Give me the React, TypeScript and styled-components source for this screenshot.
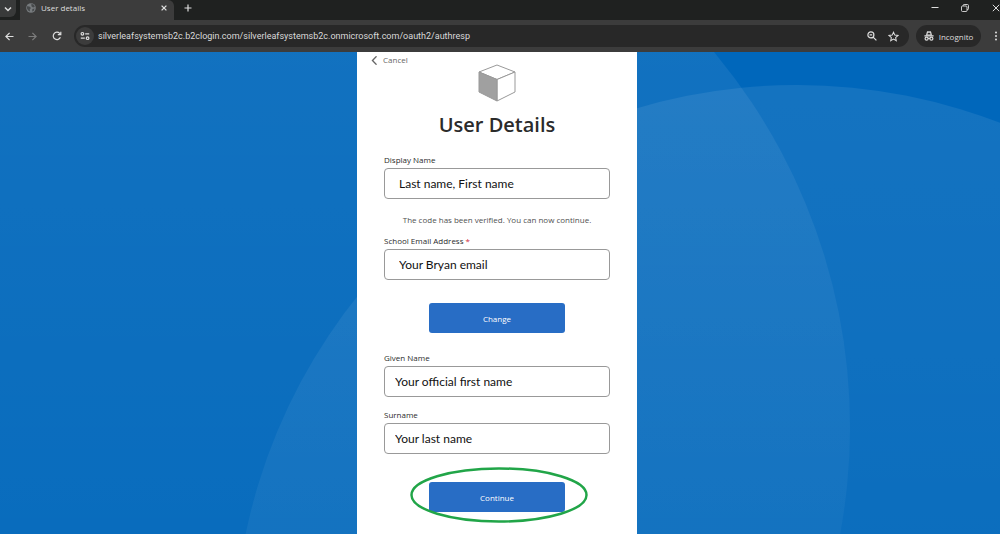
import React from "react";
import styled, { createGlobalStyle } from "styled-components";

const GlobalStyle = createGlobalStyle`
  *, *::before, *::after { box-sizing: border-box; }
  body { margin: 0; font-family: "Open Sans", "Noto Sans", sans-serif; }
  button, input { font: inherit; margin: 0; }
`;

const Window = styled.div`
  display: flex;
  flex-direction: column;
  min-height: 100vh;
  overflow: hidden;
`;

const TabStrip = styled.header`
  display: flex;
  height: 20px;
  background: #1f2120;
  color: #dedede;
`;

const IconButton = styled.button<{ $w: number; $dim?: boolean }>`
  display: flex;
  align-items: center;
  justify-content: center;
  flex: none;
  width: ${(p) => p.$w}px;
  height: 16px;
  padding: 0;
  border: 0;
  background: none;
  color: ${(p) => (p.$dim ? "#7c7c7c" : "#dedede")};
`;

const EdgeButton = styled(IconButton)`
  justify-content: flex-end;
`;

const TabSearch = styled(IconButton)`
  height: 17px;
  background: #393a3a;
  border-radius: 0 0 6px 0;
  margin-right: 4px;
`;

const Tab = styled.div`
  display: flex;
  align-items: center;
  gap: 5px;
  width: 154px;
  padding: 0 3px 4px 6px;
  background: #3c3c3c;
  border-radius: 0 6px 0 0;
  font-size: 8px;
`;

const TabTitle = styled.span`
  flex: 1;
  line-height: 16px;
`;

const WindowControls = styled.div`
  display: flex;
  margin-left: auto;
`;

const Toolbar = styled.nav`
  display: flex;
  align-items: center;
  height: 32px;
  background: #3c3c3c;
`;

const AddressBar = styled.div`
  display: flex;
  align-items: center;
  flex: 1;
  min-width: 0;
  height: 22px;
  margin: 0 7px 0 5px;
  padding: 0 5px 0 2px;
  border-radius: 11px;
  background: #282828;
`;

const SiteInfo = styled(IconButton)`
  height: 18px;
  border-radius: 9px;
  background: #3c3c3c;
`;

const AddressInput = styled.input`
  flex: 1;
  min-width: 0;
  padding: 0 0 0 4px;
  border: 0;
  outline: 0;
  background: none;
  color: #dadada;
  font-family: Roboto, sans-serif;
  font-size: 9px;
  line-height: 16px;
`;

const Incognito = styled.button`
  display: flex;
  align-items: center;
  justify-content: center;
  gap: 5px;
  width: 65px;
  height: 22px;
  padding: 0;
  border: 0;
  border-radius: 11px;
  background: #282828;
  color: #dedede;
  font-size: 8px;
`;

const Stage = styled.main`
  position: relative;
  display: flex;
  justify-content: center;
  flex: 1;
  background: #0067bb;
`;

const Backdrop = styled.svg`
  position: absolute;
  inset: 0;
  width: 100%;
  height: 100%;
`;

const Card = styled.form`
  position: relative;
  width: 280px;
  margin-right: 6px;
  background: #fff;
  color: #2b2b2b;
`;

const CardTop = styled.div`
  display: grid;
  grid-template-columns: 1fr auto 1fr;
  align-items: start;
  padding: 0 13px;
`;

const Cancel = styled.button`
  display: flex;
  align-items: center;
  gap: 4px;
  padding: 0;
  border: 0;
  background: none;
  color: #666;
  font-size: 8px;
  line-height: 16px;
`;

const Cube = styled.svg`
  width: 40px;
  height: 38px;
  margin-top: 12px;
`;

const CardBody = styled.div`
  display: flex;
  flex-direction: column;
  padding: 0 27px 6px;
`;

const Title = styled.h1`
  margin: 8px 0 14px;
  font-size: 20px;
  font-weight: 600;
  line-height: 30px;
  text-align: center;
`;

const Label = styled.label`
  font-size: 8px;
  font-weight: 500;
  line-height: 12px;
  margin-bottom: 2px;
`;

const Required = styled.span`
  color: #d0283c;
`;

const TextInput = styled.input<{ $inset: number }>`
  width: 100%;
  height: 31px;
  padding: 0 ${(p) => p.$inset}px;
  border: 1px solid #999;
  border-radius: 4px;
  background: #fff;
  color: #111;
  font-family: Lato, sans-serif;
  font-size: 12px;
`;

const Notice = styled.p`
  margin: 14px 0 8px;
  color: #505050;
  font-size: 8px;
  line-height: 14px;
  text-align: center;
`;

const Action = styled.button`
  width: 136px;
  height: 30px;
  padding: 0;
  border: 0;
  border-radius: 3px;
  background: #286dc5;
  color: #fff;
  font-size: 8px;
`;

const Field = styled.div<{ $after: number }>`
  display: flex;
  flex-direction: column;
  margin-bottom: ${(p) => p.$after}px;
`;

const ChangeRow = styled.div`
  display: flex;
  justify-content: center;
  margin-bottom: 19px;
`;

const ContinueRow = styled(ChangeRow)`
  position: relative;
  margin: 0;
`;

const Ring = styled.svg`
  position: absolute;
  left: 50%;
  top: 50%;
  width: 184px;
  height: 64px;
  transform: translate(-50%, -50%);
  pointer-events: none;
`;

const Icon = ({ size, box = 24, width = 2, children }: { size: number; box?: number; width?: number; children: React.ReactNode }) => (
  <svg width={size} height={size} viewBox={`0 0 ${box} ${box}`} fill="none" stroke="currentColor" strokeWidth={width} aria-hidden="true">
    {children}
  </svg>
);

export default function App() {
  return (
    <Window>
      <GlobalStyle />
      <TabStrip>
        <TabSearch $w={16} aria-label="Search tabs">
          <Icon size={8} box={8} width={1.5}><path d="M1 2.5 4 5.5 7 2.5" /></Icon>
        </TabSearch>
        <Tab>
          <Icon size={10} box={10} width={0}>
            <circle cx="5" cy="5" r="4.8" fill="#777b7e" />
            <path d="M1 3.2 3.4 3.6 5 5 3.8 6.2 4 8.6 2.2 7.6 1 5.6ZM5.4.8 8 1.8 8.8 4 7 4.6 5.4 3.2ZM6.4 6 8.6 5.6 7.6 8 6.2 8.6Z" fill="#46494b" />
          </Icon>
          <TabTitle>User details</TabTitle>
          <IconButton $w={14} aria-label="Close tab">
            <Icon size={6} box={6} width={1.3}><path d="M.6.6 5.4 5.4M5.4.6.6 5.4" /></Icon>
          </IconButton>
        </Tab>
        <IconButton $w={27} aria-label="New tab">
          <Icon size={8} box={8} width={1.2}><path d="M4 .5V7.5M.5 4H7.5" /></Icon>
        </IconButton>
        <WindowControls>
          <IconButton $w={30} aria-label="Minimize">
            <Icon size={8} box={8} width={1}><path d="M.5 3.5H7.5" /></Icon>
          </IconButton>
          <IconButton $w={30} aria-label="Restore">
            <Icon size={8} box={8} width={0.9}>
              <rect x=".5" y="2" width="5.5" height="5.5" rx="1" />
              <path d="M2.2 2V1.4Q2.2.5 3.1.5H6.4Q7.5.5 7.5 1.6V4.8Q7.5 5.8 6 5.8" />
            </Icon>
          </IconButton>
          <EdgeButton $w={20} aria-label="Close">
            <Icon size={8} box={8} width={1}><path d="M.8.8 7.2 7.2M7.2.8.8 7.2" /></Icon>
          </EdgeButton>
        </WindowControls>
      </TabStrip>

      <Toolbar>
        <IconButton $w={19} aria-label="Back">
          <Icon size={9} box={9} width={1.2}><path d="M8.5 4.5H1M4.6.8.9 4.5 4.6 8.2" /></Icon>
        </IconButton>
        <IconButton $w={26} $dim aria-label="Forward">
          <Icon size={9} box={9} width={1.2}><path d="M.5 4.5H8M4.4.8 8.1 4.5 4.4 8.2" /></Icon>
        </IconButton>
        <IconButton $w={24} aria-label="Reload">
          <Icon size={10} box={10} width={1.2}>
            <path d="M8.4 6.2A3.7 3.7 0 1 1 7.7 2.4L8.6 3.4" />
            <path d="M8.8.7V3.7H5.8" />
          </Icon>
        </IconButton>
        <AddressBar>
          <SiteInfo $w={18} aria-label="Site information">
            <Icon size={10} box={10} width={1.2}>
              <circle cx="2.4" cy="2.8" r="1.3" />
              <path d="M5.2 2.8H9.2M.8 7.2H4.8" />
              <circle cx="7.6" cy="7.2" r="1.3" />
            </Icon>
          </SiteInfo>
          <AddressInput
            aria-label="Address"
            defaultValue="silverleafsystemsb2c.b2clogin.com/silverleafsystemsb2c.onmicrosoft.com/oauth2/authresp"
          />
          <IconButton $w={22} aria-label="Zoom">
            <Icon size={10} box={10} width={1.2}>
              <circle cx="3.9" cy="3.9" r="3" />
              <path d="M6.1 6.1 9.4 9.4M2.6 3.9H5.2" />
            </Icon>
          </IconButton>
          <IconButton $w={21} aria-label="Bookmark">
            <Icon size={11} box={24} width={2.2}>
              <path d="m12 2.6 2.9 6.4 6.9.7-5.2 4.7 1.5 6.9-6.1-3.6-6.1 3.6 1.5-6.9L2.2 9.7l6.9-.7Z" />
            </Icon>
          </IconButton>
        </AddressBar>
        <Incognito>
          <Icon size={10} box={20} width={2.4}>
            <path d="M5.4 8 6.8 2.2Q7 1.4 8 1.7L10 2.3 12 1.7Q13 1.4 13.2 2.2L14.6 8Z" />
            <path d="M.8 9.6H19.2M8 15.2Q10 13.8 12 15.2" />
            <circle cx="5.2" cy="15.4" r="3" />
            <circle cx="14.8" cy="15.4" r="3" />
          </Icon>
          Incognito
        </Incognito>
        <EdgeButton $w={19} aria-label="Menu">
          <Icon size={10} box={10} width={0}>
            <g fill="currentColor">
              <circle cx="6" cy="1.4" r="1" />
              <circle cx="6" cy="5" r="1" />
              <circle cx="6" cy="8.6" r="1" />
            </g>
          </Icon>
        </EdgeButton>
      </Toolbar>

      <Stage>
        <Backdrop viewBox="0 0 1000 482" preserveAspectRatio="xMidYMin slice" aria-hidden="true">
          <defs>
            <linearGradient id="fade" gradientUnits="userSpaceOnUse" x1="0" y1="0" x2="0" y2="482">
              <stop offset="0" stopColor="#fff" stopOpacity="0.07" />
              <stop offset="1" stopColor="#fff" stopOpacity="0.035" />
            </linearGradient>
            <linearGradient id="fadeNear" gradientUnits="userSpaceOnUse" x1="0" y1="33" x2="0" y2="482">
              <stop offset="0" stopColor="#fff" stopOpacity="0.08" />
              <stop offset="1" stopColor="#fff" stopOpacity="0.045" />
            </linearGradient>
          </defs>
          <circle cx="265" cy="375" r="585" fill="url(#fade)" />
          <circle cx="797" cy="596" r="563" fill="url(#fadeNear)" />
        </Backdrop>
        <Card onSubmit={(e) => e.preventDefault()}>
          <CardTop>
            <Cancel type="button">
              <Icon size={9} box={8} width={1.2}><path d="M5.8.3 2.2 4 5.8 7.7" /></Icon>
              Cancel
            </Cancel>
            <Cube viewBox="0 0 40 38" role="img" aria-label="Logo">
              <path d="M20 1 38 8 20 15.500 2 8Z" fill="#fff" stroke="#999" strokeWidth="1" strokeLinejoin="round" />
              <path d="M38 8V28L20 37V15.500Z" fill="#fff" stroke="#999" strokeWidth="1" strokeLinejoin="round" />
              <path d="M2 8 20 15.500V37L2 28Z" fill="#a0a0a0" stroke="#999" strokeWidth="1" strokeLinejoin="round" />
            </Cube>
          </CardTop>
          <CardBody>
            <Title>User Details</Title>
            <Field $after={0}>
              <Label htmlFor="display">Display Name</Label>
              <TextInput id="display" $inset={14} defaultValue="Last name, First name" />
            </Field>
            <Notice>The code has been verified. You can now continue.</Notice>
            <Field $after={23}>
              <Label htmlFor="email">School Email Address <Required>*</Required></Label>
              <TextInput id="email" $inset={14} defaultValue="Your Bryan email" />
            </Field>
            <ChangeRow>
              <Action type="button">Change</Action>
            </ChangeRow>
            <Field $after={12}>
              <Label htmlFor="given">Given Name</Label>
              <TextInput id="given" $inset={10} defaultValue="Your official first name" />
            </Field>
            <Field $after={28}>
              <Label htmlFor="surname">Surname</Label>
              <TextInput id="surname" $inset={10} defaultValue="Your last name" />
            </Field>
            <ContinueRow>
              <Action type="submit">Continue</Action>
              <Ring viewBox="0 0 184 64" aria-hidden="true">
                <ellipse cx="94" cy="30" rx="87.500" ry="26.500" fill="none" stroke="#21a548" strokeWidth="2.500" />
              </Ring>
            </ContinueRow>
          </CardBody>
        </Card>
      </Stage>
    </Window>
  );
}
